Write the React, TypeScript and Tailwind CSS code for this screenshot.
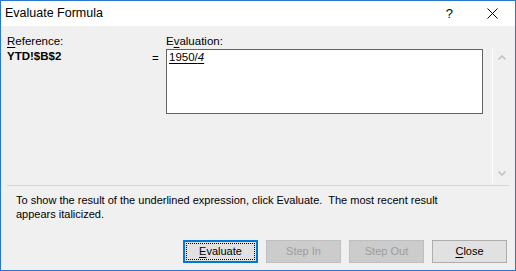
export default function App() {
  return (
    <div className="w-[516px] h-[271px] bg-[#f0f0f0] border border-[#2b76cf] flex flex-col font-['Liberation_Sans',sans-serif] text-[11px] leading-[15px] text-black">
      {/* Title bar */}
      <div className="h-[25px] bg-white flex items-center shrink-0">
        <span className="ml-[4px] text-[12.5px]">Evaluate Formula</span>
        <span className="ml-auto text-[13px] mr-[34px]">?</span>
        <svg width="11" height="11" viewBox="0 0 11 11" className="mr-[17px]">
          <path d="M0.5 0.5 L10.5 10.5 M10.5 0.5 L0.5 10.5" stroke="#000" strokeWidth="1" />
        </svg>
      </div>

      {/* Body */}
      <div className="flex flex-col pt-[8px]">
        <div className="flex pl-[6px] text-[11.5px]">
          <span className="w-[159px]">
            <span className="underline underline-offset-2">R</span>eference:
          </span>
          <span>
            E<span className="underline underline-offset-2">v</span>aluation:
          </span>
        </div>
        <div className="flex items-start pl-[6px] text-[11.5px]">
          <span className="w-[145px] font-bold">YTD!$B$2</span>
          <span className="w-[14px] mt-[2px]">=</span>
          <div className="w-[317px] h-[65px] bg-white border border-[#646464] pl-[2px]">
            <span className="underline underline-offset-2">
              1950/<span className="italic">4</span>
            </span>
          </div>
          <div className="ml-[9px] w-[18px] h-[134px] border-l border-white flex flex-col items-center justify-between pt-[6px] pb-[7px]">
            <svg width="8" height="5" viewBox="0 0 8 5">
              <path d="M0.5 4.5 L4 1 L7.5 4.5" stroke="#c3c3c3" strokeWidth="1.6" fill="none" />
            </svg>
            <svg width="8" height="5" viewBox="0 0 8 5">
              <path d="M0.5 0.5 L4 4 L7.5 0.5" stroke="#c3c3c3" strokeWidth="1.6" fill="none" />
            </svg>
          </div>
        </div>
        <div className="mx-[6px] mt-[2px] h-px bg-[#d9d9d9]" />
        <p className="pl-[15px] pr-[60px] mt-[7px] leading-[14px]">
          To show the result of the underlined expression, click Evaluate.&nbsp; The most recent result appears italicized.
        </p>
      </div>

      {/* Buttons */}
      <div className="mt-auto mb-[7px] flex justify-end gap-[8px] pr-[8px]">
        <div className="w-[75px] h-[23px] border-2 border-[#0078d7] bg-[#e1e1e1] p-px">
          <div className="w-full h-full border border-dotted border-black flex items-center justify-center">
            <span><span className="underline underline-offset-2">E</span>valuate</span>
          </div>
        </div>
        <div className="w-[75px] h-[23px] border border-[#bfbfbf] bg-[#cccccc] text-[#9d9d9d] flex items-center justify-center">
          Step In
        </div>
        <div className="w-[75px] h-[23px] border border-[#bfbfbf] bg-[#cccccc] text-[#9d9d9d] flex items-center justify-center">
          Step Out
        </div>
        <div className="w-[75px] h-[23px] border border-[#adadad] bg-[#e1e1e1] flex items-center justify-center">
          <span><span className="underline underline-offset-2">C</span>lose</span>
        </div>
      </div>
    </div>
  );
}
